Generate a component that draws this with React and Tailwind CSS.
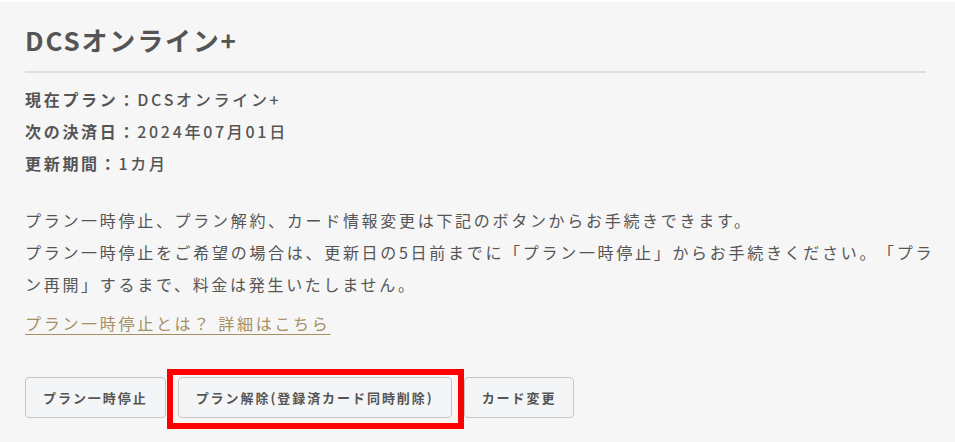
// Plan status panel for the DCS online subscription page.
// Static content only - the buttons just render, no handlers wired up here.

const info = [
  { label: "現在プラン", value: "DCSオンライン+" },
  { label: "次の決済日", value: "2024年07月01日" },
  { label: "更新期間", value: "1カ月" },
];

function PlanButton({ children }) {
  return (
    <button
      type="button"
      className="h-[41px] rounded-[4px] border border-[#c6c6c6] bg-[#f4f5f7] px-[17px] text-[13px] font-bold tracking-[0.15em] text-[#555]"
    >
      {children}
    </button>
  );
}

export default function App() {
  return (
    <div
      className="min-h-[442px] bg-white pt-[2px] [text-spacing-trim:space-all]"
      style={{ fontFamily: '"Noto Sans CJK JP", "Noto Sans", sans-serif' }}
    >
      <div className="min-h-[440px] bg-[#f6f6f6] pl-[25px] pr-[29px] pt-[18px]">
        <h2 className="border-b-2 border-[#dedede] pb-[12px] text-[26px] font-bold leading-[39px] tracking-[0.07em] text-[#555]">
          DCSオンライン+
        </h2>

        <dl className="mt-[10px] text-[16px] font-bold leading-[32px] tracking-[2.7px] text-[#555]">
          {info.map((row) => (
            <div key={row.label} className="flex">
              <dt>{row.label}：</dt>
              <dd className="font-medium">{row.value}</dd>
            </div>
          ))}
        </dl>

        {/* text runs a little past the rule on the right, as on the live page */}
        <p className="-mr-[12px] mt-[25px] text-[16px] leading-[32px] tracking-[2.7px] text-[#555]">
          プラン一時停止、プラン解約、カード情報変更は下記のボタンからお手続きできます。
          <br />
          プラン一時停止をご希望の場合は、更新日の5日前までに「プラン一時停止」からお手続きください。「プラン再開」するまで、料金は発生いたしません。
        </p>
        <p className="mt-[7px] text-[16px] leading-[32px] tracking-[2.7px]">
          <a href="#" className="text-[#a58f63] underline underline-offset-[4px]">
            プラン一時停止とは？ 詳細はこちら
          </a>
        </p>

        <div className="mt-[38px] flex items-start gap-[12px]">
          <PlanButton>プラン一時停止</PlanButton>
          <div className="relative">
            <PlanButton>プラン解除(登録済カード同時削除)</PlanButton>
            <span className="pointer-events-none absolute -bottom-[11px] -left-[11px] -right-[12px] -top-[8px] border-[6px] border-[#ff0000]" />
          </div>
          <PlanButton>カード変更</PlanButton>
        </div>
      </div>
    </div>
  );
}
